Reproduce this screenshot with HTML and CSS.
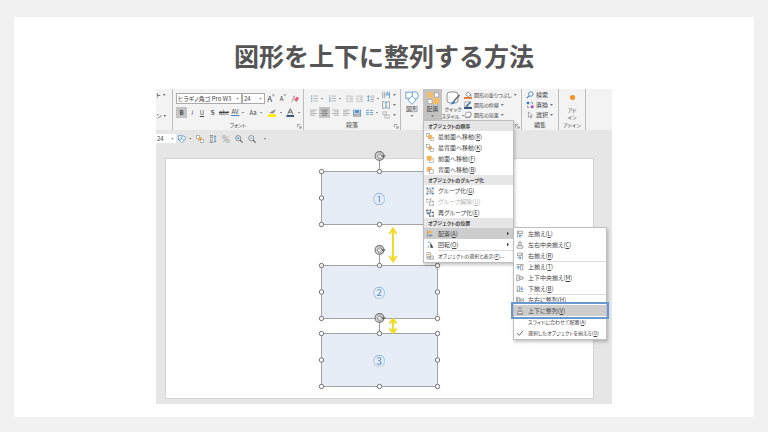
FILE: index.html
```html
<!DOCTYPE html>
<html lang="ja">
<head>
<meta charset="utf-8">
<meta name="viewport" content="width=device-width, initial-scale=1">
<title>図形を上下に整列する方法</title>
<link rel="stylesheet" href="styles.css">
</head>
<body>
<svg class="defs" aria-hidden="true">
  <symbol id="front" viewBox="0 0 10 10"><rect x=".8" y=".8" width="3.6" height="3.6" fill="#fff" stroke="#8a8a8a" stroke-width=".7"/><rect x="5.6" y="5.8" width="3.6" height="3.4" fill="#fff" stroke="#8a8a8a" stroke-width=".7"/><rect x="2.4" y="2.4" width="5" height="5" fill="#f4b45c"/></symbol>
  <symbol id="back" viewBox="0 0 10 10"><rect x="2.4" y="2.4" width="5" height="5" fill="#f4b45c"/><rect x=".8" y=".8" width="3.6" height="3.6" fill="#fff" stroke="#8a8a8a" stroke-width=".7"/><rect x="5.6" y="5.8" width="3.6" height="3.4" fill="#fff" stroke="#8a8a8a" stroke-width=".7"/></symbol>
  <symbol id="forward" viewBox="0 0 10 10"><rect x="4.6" y="4.8" width="4.4" height="4.4" fill="#fff" stroke="#888" stroke-width=".7"/><rect x="1" y="1" width="6" height="6" fill="#f4b45c"/></symbol>
  <symbol id="backward" viewBox="0 0 10 10"><rect x="1" y="1" width="6" height="6" fill="#f4b45c"/><rect x="4.6" y="4.8" width="4.4" height="4.4" fill="#fff" stroke="#888" stroke-width=".7"/></symbol>
  <symbol id="group" viewBox="0 0 10 10"><rect x="1.4" y="1.4" width="7.4" height="7.2" fill="none" stroke="#777" stroke-width=".6"/><path d="M3 3h3v3H3zM5 5h2.500v2.500H5z" fill="none" stroke="#888" stroke-width=".7"/><path d="M.6.6h1.800v1.800H.6zM7.800.6h1.800v1.800H7.800zM.6 7.600h1.800v1.800H.6zM7.800 7.600h1.800v1.800H7.800z" fill="#3d82c4"/></symbol>
  <symbol id="ungroup" viewBox="0 0 10 10"><path d="M1 1.500h4.500v4H1zM4.500 4h4.500v5H4.500z" fill="none" stroke="#aaa" stroke-width=".8"/><path d="M.4.7H2v1.500H.4zM5 .7h1.500v1.500H5zM8 3.400h1.500v1.500H8zM4 8.200h1.500v1.500H4zM8.200 8.200h1.500v1.500H8.200z" fill="#999"/></symbol>
  <symbol id="regroup" viewBox="0 0 10 10"><path d="M1 1.500h4.500v4H1zM4.500 4h4.500v5H4.500z" fill="none" stroke="#666" stroke-width=".7"/><path d="M.4.7H2v1.500H.4zM5 .7h1.500v1.500H5zM8 3.400h1.500v1.500H8zM4 8.200h1.500v1.500H4zM8.200 8.200h1.500v1.500H8.200z" fill="#444"/><path d="M2.800 3v3.600M1.200 5l1.600 1.800L4.400 5" fill="none" stroke="#2b78c2"/></symbol>
  <symbol id="alignobj" viewBox="0 0 10 10"><path d="M2 1v8" stroke="#777" stroke-width=".7"/><rect x="2.800" y="1" width="4.500" height="3.500" fill="#f4b45c"/><path d="M8 7H4M5.500 5.500L4 7l1.500 1.500" fill="none" stroke="#2b78c2"/></symbol>
  <symbol id="rotate" viewBox="0 0 10 10"><path d="M5.500 8.500V2L9.400 8.500z" fill="#444"/><path d="M4.400 8.500H.6L4.400 3.500z" fill="#bcd3ea"/><path d="M2 2.500C3 1 4.500 1 5 2.500" fill="none" stroke="#2b78c2" stroke-width=".8"/></symbol>
  <symbol id="pane" viewBox="0 0 10 10"><path d="M1 .8h5v8H1z" fill="#fff" stroke="#888" stroke-width=".7"/><path d="M2.200 2h2.500v2H2.200z" fill="#f4b45c"/><path d="M2.200 5.500h2.500v2H2.200zM5.500 5h3.800v4H5.500z" fill="#fff" stroke="#777" stroke-width=".7"/><path d="M6.500 6l2 2" stroke="#d99a42" stroke-width=".8"/></symbol>
  <symbol id="al" viewBox="0 0 10 10"><path d="M2 .5v9" stroke="#777" stroke-width=".8"/><path d="M3.300 1.500h5v3h-5z" fill="#fff" stroke="#777" stroke-width=".8"/><path d="M8 7.200H4M5.600 5.500L3.800 7.200l1.800 1.700" fill="none" stroke="#2b78c2"/></symbol>
  <symbol id="av" viewBox="0 0 10 10"><path d="M5 0v2M5 5v1M5 9v1" stroke="#777" stroke-width=".8"/><path d="M3.300 2h3.400v3H3.300zM1.500 6h7v3h-7z" fill="#fff" stroke="#777" stroke-width=".8"/></symbol>
  <symbol id="dv" viewBox="0 0 10 10"><path d="M3 .7h4M1 9.300h8" stroke="#777" stroke-width=".8"/><path d="M3.500 2.300h3v2.200h-3zM2 5.800h6v2.200H2z" fill="#fff" stroke="#777" stroke-width=".8"/></symbol>
  <symbol id="lines" viewBox="0 0 10 10"><path d="M0 1.500h10M0 4h7M0 6.500h10M0 9h7" stroke="#919191" stroke-width=".9"/></symbol>
  <symbol id="center" viewBox="0 0 10 10"><path d="M0 1.500h10M1.500 4h7M0 6.500h10M1.500 9h7" stroke="#666" stroke-width=".9"/></symbol>
  <symbol id="list" viewBox="0 0 10 10"><path d="M0 1.500h1.800M0 5h1.800M0 8.500h1.800" stroke="#3d82c4" stroke-width="1.400"/><path d="M3.500 1.500H10M3.500 5H10M3.500 8.500H10" stroke="#888" stroke-width=".8"/></symbol>
  <symbol id="numbers" viewBox="0 0 10 10"><path d="M1 0v3M.2 4.200h1.600v1L.2 6.200h1.600M.2 7.500h1.600v2H.2" fill="none" stroke="#3d82c4" stroke-width=".7"/><path d="M3.500 1.500H10M3.500 5H10M3.500 8.500H10" stroke="#888" stroke-width=".8"/></symbol>
  <symbol id="indent" viewBox="0 0 10 10"><path d="M0 1.500h10M5 4h5M5 6.500h5M0 9h10" stroke="#aaa" stroke-width=".9"/><path d="M0 5.200h3.500M2 3.800L.4 5.200 2 6.600" fill="none" stroke="#aaa" stroke-width=".8"/></symbol>
  <symbol id="spacing" viewBox="0 0 10 10"><path d="M2 1v8M.5 2.800L2 1l1.500 1.800M.5 7.200L2 9l1.500-1.800" fill="none" stroke="#3d82c4" stroke-width=".9"/><path d="M5 1.500h5M5 4h5M5 6.500h5M5 9h5" stroke="#888" stroke-width=".8"/></symbol>
  <symbol id="columns" viewBox="0 0 10 10"><path d="M0 2h4.300M0 5h4.300M0 8h4.300M5.700 2H10M5.700 5H10M5.700 8H10" stroke="#5a96cc" stroke-width="1.200"/></symbol>
  <symbol id="direction" viewBox="0 0 10 10"><path d="M1 1v8M3.400 1v8" stroke="#777" stroke-width=".8"/><path d="M5 6l1.800-5L8.600 6M5.600 4.500H8M9.400 1v8M8.200 7.800L9.400 9" fill="none" stroke="#3d82c4" stroke-width=".8"/></symbol>
  <symbol id="vfit" viewBox="0 0 10 10"><path d="M3 .7H.8v8.600H3M7 .7h2.200v8.600H7" fill="none" stroke="#777" stroke-width=".8"/><path d="M5 1v8M3.600 2.500L5 1l1.400 1.500M3.600 7.500L5 9l1.400-1.500" fill="none" stroke="#3d82c4" stroke-width=".9"/></symbol>
  <symbol id="shapes" viewBox="0 0 14 14"><circle cx="9.500" cy="4.500" r="3.800" fill="#fff" stroke="#5a9bd5" stroke-width=".9"/><rect x=".8" y="1.200" width="6.500" height="6" fill="#fff" stroke="#5a9bd5" stroke-width=".9"/><path d="M7 4.800l4.200 4.200L7 13.300 2.800 9z" fill="#fff" stroke="#5a9bd5" stroke-width=".9"/></symbol>
  <symbol id="launch" viewBox="0 0 6 6"><path d="M.5 4V.5H4M2.200 2.200L5 5M5 2.500V5H2.500" fill="none" stroke="#777" stroke-width=".8"/></symbol>
  <symbol id="zoomer" viewBox="0 0 10 10"><circle cx="4" cy="4" r="3.200" fill="#fff" stroke="#666" stroke-width=".9"/><path d="M6.400 6.400L9.500 9.500" stroke="#555" stroke-width="1.300"/><path d="M2.300 4h3.400" stroke="#2b78c2" stroke-width=".9"/></symbol>
  <symbol id="handles" viewBox="0 0 117 72" overflow="visible">
    <path d="M58.500 5v12" stroke="#999"/>
    <rect x=".5" y="17.500" width="116" height="53" fill="#e6edf6" stroke="#a3a3a3"/>
    <g fill="#fff" stroke="#707070"><circle cx=".5" cy="17.500" r="2.200"/><circle cx="58.500" cy="17.500" r="2.200"/><circle cx="116.500" cy="17.500" r="2.200"/><circle cx=".5" cy="44" r="2.200"/><circle cx="116.500" cy="44" r="2.200"/><circle cx=".5" cy="70.500" r="2.200"/><circle cx="58.500" cy="70.500" r="2.200"/><circle cx="116.500" cy="70.500" r="2.200"/></g>
    <circle cx="58.500" cy="2" r="4.400" fill="#ddd" stroke="#777" stroke-width="1.100"/><path d="M60.500 3.800A2.400 2.400 0 1 1 61 1.500" fill="none" stroke="#777" stroke-width=".8"/><path d="M59.800 1.200h5l-2.500 2.800z" fill="#666"/>
  </symbol>
</svg>

<main class="card">
  <h1 class="title">図形を上下に整列する方法</h1>

  <section class="app">
    <div class="ribbon">
      <div class="group group-edge">
        <span>ト<i class="caret"></i></span><span>ン<i class="caret"></i></span>
      </div>

      <div class="group group-font">
        <div class="body rows">
          <div class="row">
            <label class="combo combo-font"><select class="field" aria-label="フォント名"><option>ヒラギノ角ゴ Pro W3</option></select><i class="caret"></i></label>
            <label class="combo combo-size"><select class="field" aria-label="フォント サイズ"><option>24</option></select><i class="caret"></i></label>
            <button class="tool w12 big">A<sup>^</sup></button>
            <button class="tool w12">A<sup>ˇ</sup></button>
            <button class="tool w12" aria-label="書式のクリア"><svg class="ic8" viewBox="0 0 10 10"><path d="M1 9l3-8 2.500 7M2 5.500h3" fill="none" stroke="#b888b0"/><path d="M4.500 6.500L7.500 2 10 4 6.800 8.500z" fill="#e05d6c"/></svg></button>
          </div>
          <div class="row">
            <button class="tool w11 on"><b>B</b></button>
            <button class="tool w10"><em>I</em></button>
            <button class="tool w10"><u>U</u></button>
            <button class="tool w11"><b>S</b></button>
            <button class="tool w12"><s>abc</s></button>
            <button class="tool w16"><span class="kern">AV</span><i class="caret"></i></button>
            <button class="tool w20">Aa<i class="caret"></i></button>
            <button class="tool w18" aria-label="蛍光ペンの色"><svg class="ic9" viewBox="0 0 10 10"><path d="M1 5.500L9 1 6 6z" fill="#888"/><path d="M0 7h9v3H0z" fill="#ffeb00"/></svg><i class="caret"></i></button>
            <button class="tool w18" aria-label="フォントの色"><svg class="ic9" viewBox="0 0 10 10"><path d="M2 6.500L4.800.8l2.800 5.700M3 4.600h3.600" fill="none" stroke="#555"/><path d="M.5 7.600h8.500V10H.5z" fill="#3f5878"/></svg><i class="caret"></i></button>
          </div>
        </div>
        <div class="caption caption-kana">フォント<svg class="launch"><use href="#launch"/></svg></div>
      </div>

      <div class="group group-para">
        <div class="body split">
          <div class="rows">
            <div class="row">
              <button class="tool w18" aria-label="箇条書き"><svg class="ic7"><use href="#list"/></svg><i class="caret"></i></button>
              <button class="tool w18" aria-label="段落番号"><svg class="ic7"><use href="#numbers"/></svg><i class="caret"></i></button>
              <button class="tool w10" aria-label="インデントを減らす"><svg class="ic7"><use href="#indent"/></svg></button>
              <button class="tool w10" aria-label="インデントを増やす"><svg class="ic7"><use href="#indent"/></svg></button>
              <button class="tool w18" aria-label="行間"><svg class="ic7"><use href="#spacing"/></svg><i class="caret"></i></button>
            </div>
            <div class="row">
              <button class="tool w11" aria-label="左揃え"><svg class="ic7"><use href="#lines"/></svg></button>
              <button class="tool w11 on" aria-label="中央揃え"><svg class="ic7"><use href="#center"/></svg></button>
              <button class="tool w11" aria-label="右揃え"><svg class="ic7 flip"><use href="#lines"/></svg></button>
              <button class="tool w11" aria-label="両端揃え"><svg class="ic7"><use href="#lines"/></svg></button>
              <button class="tool w10" aria-label="均等割り付け"><svg class="ic8" viewBox="0 0 10 10"><path d="M.5.500v9M9.500.500v9" stroke="#3d82c4"/><path d="M2 1h6v4H2z" fill="#5a96cc"/><path d="M1 6.500h8M1 8.800h8" stroke="#666"/></svg></button>
              <button class="tool w20" aria-label="段組み"><svg class="ic7"><use href="#columns"/></svg><i class="caret"></i></button>
            </div>
          </div>
          <div class="stack">
            <button class="tool" aria-label="文字列の方向"><svg class="ic8"><use href="#direction"/></svg><i class="caret"></i></button>
            <button class="tool" aria-label="文字の配置"><svg class="ic8"><use href="#vfit"/></svg><i class="caret"></i></button>
            <button class="tool" aria-label="SmartArt に変換"><svg class="ic8" viewBox="0 0 10 10"><path d="M.8 1h5v3.500h-5zM3.500 5h5.700v4H3.500z" fill="#e8e8e8" stroke="#aaa" stroke-width=".8"/></svg><i class="caret"></i></button>
          </div>
        </div>
        <div class="caption">段落<svg class="launch"><use href="#launch"/></svg></div>
      </div>

      <div class="group group-draw">
        <div class="body split">
          <button class="large large-shapes"><svg class="ic14"><use href="#shapes"/></svg>図形<i class="caret"></i></button>
          <div class="anchor">
            <button class="large on" aria-haspopup="menu" aria-expanded="true"><svg class="ic14" viewBox="0 0 14 14"><path d="M1 1h6v6H1zM7 7h6.500v6H7z" fill="#f3bd6c"/><path d="M8.500 2h4v4h-4zM2 8.500h4v4H2z" fill="#fff" stroke="#999" stroke-width=".6"/></svg>配置<i class="caret"></i></button>
            <ul class="menu" role="menu">
              <li class="head">オブジェクトの順序</li>
              <li><button class="item"><svg><use href="#front"/></svg>最前面へ移動(<u>R</u>)</button></li>
              <li><button class="item"><svg><use href="#back"/></svg>最背面へ移動(<u>K</u>)</button></li>
              <li><button class="item"><svg><use href="#forward"/></svg>前面へ移動(<u>F</u>)</button></li>
              <li><button class="item"><svg><use href="#backward"/></svg>背面へ移動(<u>B</u>)</button></li>
              <li class="head">オブジェクトのグループ化</li>
              <li><button class="item"><svg><use href="#group"/></svg>グループ化(<u>G</u>)</button></li>
              <li><button class="item" disabled><svg><use href="#ungroup"/></svg>グループ解除(<u>U</u>)</button></li>
              <li><button class="item"><svg><use href="#regroup"/></svg>再グループ化(<u>E</u>)</button></li>
              <li class="head">オブジェクトの位置</li>
              <li class="anchor">
                <button class="item active"><svg><use href="#alignobj"/></svg>配置(<u>A</u>)<i class="more"></i></button>
                <ul class="menu submenu" role="menu">
                  <li><button class="item"><svg><use href="#al"/></svg>左揃え(<u>L</u>)</button></li>
                  <li><button class="item"><svg><use href="#av"/></svg>左右中央揃え(<u>C</u>)</button></li>
                  <li><button class="item"><svg class="flip"><use href="#al"/></svg>右揃え(<u>R</u>)</button></li>
                  <li class="ruled"><button class="item"><svg class="turn"><use href="#al"/></svg>上揃え(<u>T</u>)</button></li>
                  <li><button class="item"><svg class="turn"><use href="#av"/></svg>上下中央揃え(<u>M</u>)</button></li>
                  <li><button class="item"><svg class="turn-back"><use href="#al"/></svg>下揃え(<u>B</u>)</button></li>
                  <li class="ruled"><button class="item"><svg class="turn"><use href="#dv"/></svg>左右に整列(<u>H</u>)</button></li>
                  <li><button class="item active marked"><svg><use href="#dv"/></svg>上下に整列(<u>V</u>)</button></li>
                  <li><button class="item kana"><svg></svg>スライドに合わせて配置(<u>A</u>)</button></li>
                  <li><button class="item kana"><svg viewBox="0 0 10 10"><path d="M1.500 5.200L4 8l5-6" fill="none" stroke="#555" stroke-width="1.100"/></svg>選択したオブジェクトを揃える(<u>O</u>)</button></li>
                </ul>
              </li>
              <li><button class="item"><svg><use href="#rotate"/></svg>回転(<u>O</u>)<i class="more"></i></button></li>
              <li class="ruled"><button class="item kana"><svg><use href="#pane"/></svg>オブジェクトの選択と表示(<u>P</u>)...</button></li>
            </ul>
          </div>
          <button class="large large-style"><svg class="ic14" viewBox="0 0 14 14"><rect x="1" y="1" width="11" height="11" rx="3" fill="#fff" stroke="#777" stroke-width=".8"/><path d="M13.500 4L8 10" stroke="#666" stroke-width="1.400"/><path d="M4.500 13.500c2 0 4.500-1 4.500-3.500C6.500 9 6.500 12 4.500 13.500z" fill="#2b78c2"/></svg><span>クイック</span><span>スタイル<i class="caret"></i></span></button>
          <div class="stack stack-text">
            <button class="tool small"><svg class="ic8" viewBox="0 0 10 10"><path d="M2 4.500L5 1l3.500 3.500-3 2.500z" fill="#fff" stroke="#777"/><path d="M8.500 4v3" stroke="#3d82c4"/><path d="M0 7.500h10V10H0z" fill="#ed7d31"/></svg>図形の塗りつぶし<i class="caret"></i></button>
            <button class="tool small"><svg class="ic8" viewBox="0 0 10 10"><path d="M1 1h6M1 1v6h6" fill="none" stroke="#999"/><path d="M3 6.500L8.500 1" stroke="#2b68a8" stroke-width="1.600"/><path d="M0 7.500h10V10H0z" fill="#34557f"/></svg>図形の枠線<i class="caret"></i></button>
            <button class="tool small"><svg class="ic8" viewBox="0 0 10 10"><path d="M2 9l-1-2.500L3.500 1.500h5L10 4 7.500 9z" fill="#aaa"/><path d="M1 5.500L3 1.500h5L9 4 7 7.500H2z" fill="#fff" stroke="#777" stroke-width=".8"/></svg>図形の効果<i class="caret"></i></button>
          </div>
        </div>
        <div class="caption"><svg class="launch"><use href="#launch"/></svg></div>
      </div>

      <div class="group group-edit">
        <div class="body stack">
          <button class="tool"><svg class="ic8" viewBox="0 0 10 10"><circle cx="6" cy="3.800" r="2.800" fill="#fff" stroke="#2b78c2"/><path d="M4 6L1 9" stroke="#2b78c2" stroke-width="1.300"/></svg>検索</button>
          <button class="tool"><svg class="ic8" viewBox="0 0 10 10"><path d="M1 1h3v3H1z" fill="#2b78c2"/><path d="M6 5.500h3.500V9H6z" fill="#a557b5"/><path d="M6 2h2v2M4 8H2V6" fill="none" stroke="#777"/></svg>置換<i class="caret"></i></button>
          <button class="tool"><svg class="ic8" viewBox="0 0 10 10"><path d="M3 1v7l1.800-1.600L6 9l1-.5-1.200-2.500H8z" fill="#fff" stroke="#777" stroke-width=".8"/></svg>選択<i class="caret"></i></button>
        </div>
        <div class="caption">編集</div>
      </div>

      <div class="group group-addin">
        <button class="large"><span class="dot"></span><span>アド</span><span>イン</span></button>
        <div class="caption caption-kana">アドイン</div>
      </div>
    </div>

    <div class="quick">
      <label class="combo combo-quick"><select class="field" aria-label="サイズ"><option>24</option></select><i class="caret"></i></label>
      <button class="tool w16" aria-label="図形"><svg class="ic8" viewBox="0 0 10 10"><rect x=".6" y="1" width="5" height="5" fill="#fff" stroke="#3d82c4" stroke-width=".8"/><circle cx="6.500" cy="4" r="2.800" fill="#fff" stroke="#3d82c4" stroke-width=".8"/><path d="M4.800 4l2.800 2.800-2.800 2.800L2 6.800z" fill="#fff" stroke="#3d82c4" stroke-width=".8"/></svg><i class="caret"></i></button>
      <button class="tool w12" aria-label="配置"><svg class="ic8"><use href="#back"/></svg></button>
      <button class="tool w12" aria-label="上下に整列"><svg class="ic8" viewBox="0 0 10 10"><path d="M1 1h4M1 9h4" stroke="#555"/><path d="M2 2.500h2v5H2z" fill="#fff" stroke="#777" stroke-width=".7"/><path d="M7.500 1v8M6.300 2.300L7.500 1l1.200 1.300M6.300 7.700L7.500 9l1.200-1.300" fill="none" stroke="#3d82c4"/></svg></button>
      <button class="tool w12" aria-label="切り替え"><svg class="ic8" viewBox="0 0 10 10"><path d="M1 1h3v3H1zM5 6h4v3H5zM8.500 1L1.500 8.500" fill="none" stroke="#a3a3a3"/></svg></button>
      <button class="tool w12" aria-label="拡大"><svg class="ic8" viewBox="0 0 10 10"><use href="#zoomer"/><path d="M4 2.300v3.400" stroke="#2b78c2"/></svg></button>
      <button class="tool w12" aria-label="縮小"><svg class="ic8"><use href="#zoomer"/></svg></button>
      <button class="tool w12" aria-label="その他"><i class="caret"></i></button>
    </div>

    <div class="workspace">
      <div class="slide">
        <div class="shape first"><svg><use href="#handles"/></svg><span>①</span></div>
        <div class="shape second"><svg><use href="#handles"/></svg><span>②</span></div>
        <div class="shape third"><svg><use href="#handles"/></svg><span>③</span></div>
        <svg class="arrow tall" viewBox="0 0 10 36"><path d="M5 2v32M1.500 7L5 1.500 8.500 7M1.500 29L5 34.500 8.500 29"/></svg>
        <svg class="arrow short" viewBox="0 0 10 16"><path d="M5 2v12M1.500 5.500L5 1.200l3.500 4.300M1.500 10.500L5 14.800l3.500-4.300"/></svg>
      </div>
    </div>
  </section>
</main>
</body>
</html>
```
FILE: styles.css
```css
* { box-sizing: border-box; }

body {
  margin: 0;
  min-height: 100vh;
  padding: 17px 14px 15px;
  display: flex;
  background: #f1f1f1;
  color: #444;
  font-family: "Noto Sans CJK JP", "Noto Sans", sans-serif;
  font-feature-settings: "palt";
}

button, select {
  margin: 0;
  padding: 0;
  border: 0;
  background: none;
  color: inherit;
  font: inherit;
  font-feature-settings: inherit;
}

svg { display: block; flex: none; }
.defs { position: absolute; width: 0; height: 0; }

.card {
  flex: 1;
  padding: 20px 142px 12px;
  background: #fff;
}

.title {
  margin: 0 0 16px;
  line-height: 36px;
  font-size: 25px;
  font-weight: 700;
  font-feature-settings: normal;
  text-align: center;
  white-space: nowrap;
  color: #555;
}

.app {
  background: #e6e6e6;
  font-size: 6px;
  line-height: 8px;
  white-space: nowrap;
}

/* Ribbon */
.ribbon {
  display: flex;
  height: 41px;
  background: #f3f3f3;
}

.group {
  display: flex;
  flex-direction: column;
  border-right: 1px solid #bdbdbd;
}
.group-edge { width: 17px; padding: 2px 0 0; gap: 13px; }
.group-edge span { display: flex; align-items: center; gap: 2px; }
.group-font { width: 131px; }
.group-para { width: 97px; }
.group-draw { width: 121px; }
.group-edit { width: 37px; }
.group-addin { width: 27px; }

.body { height: 32px; }
.rows { display: flex; flex-direction: column; gap: 3px; padding: 4px 0 0 3px; }
.split { display: flex; }
.split .rows { padding-left: 4px; }
.row { display: flex; height: 11px; }
.stack { display: flex; flex-direction: column; padding-top: 1px; }
.group-edit .stack { padding-left: 4px; }

.caption {
  position: relative;
  text-align: center;
}
.caption-kana { font-size: 5px; }
.launch {
  position: absolute;
  right: 1px;
  top: 3px;
  width: 5px;
  height: 5px;
}

.caret {
  flex: none;
  width: 3px;
  height: 2px;
  background: #777;
  clip-path: polygon(0 0, 100% 0, 50% 100%);
}

.tool {
  display: flex;
  align-items: center;
  justify-content: center;
  gap: 3px;
}
.tool sup { align-self: flex-start; font-size: 5px; line-height: 5px; }
.tool:has(sup) { gap: 0; }
.big { font-size: 8px; }
.stack .tool { height: 10px; justify-content: flex-start; }
.small { font-size: 5px; }
.stack-text .tool, .group-edit .tool { gap: 2px; }
.on { background: #c3c3c3; }
.kern { border-bottom: 1px solid #3d82c4; line-height: 6px; }

.w10 { width: 10px; }
.w11 { width: 11px; }
.w12 { width: 12px; }
.w16 { width: 16px; }
.w18 { width: 18px; }
.w20 { width: 20px; }
.ic7 { width: 7px; height: 7px; }
.ic8 { width: 8px; height: 8px; }
.ic9 { width: 9px; height: 9px; }
.ic14 { width: 14px; height: 14px; }

.combo {
  display: flex;
  align-items: center;
  padding-right: 2px;
  border: 1px solid #ababab;
  background: #fff;
}
.combo-font { width: 66px; }
.combo-size { width: 23px; }
.combo-quick { width: 20px; height: 9px; border: 0; }
.field { appearance: none; flex: 1; min-width: 0; padding-left: 1px; }

.large {
  display: flex;
  flex-direction: column;
  align-items: center;
  width: 19px;
  height: 31px;
  padding-top: 2px;
}
.large .caret { margin-top: 2px; }
.large-shapes { width: 22px; }
.large-style { width: 22px; font-size: 5px; line-height: 7px; }
.large-style span { display: flex; align-items: center; gap: 2px; }
.large-style .caret { margin: 0; }
.group-addin .large { width: 26px; height: 32px; padding-top: 6px; font-size: 5px; line-height: 7px; }
.dot { width: 5px; height: 5px; margin-bottom: 6px; border-radius: 50%; background: #f7901e; }

/* Menus */
.anchor { position: relative; }
.menu {
  position: absolute;
  z-index: 2;
  top: 31px;
  left: 0;
  width: 91px;
  margin: 0;
  padding: 0 0 1px;
  border: 1px solid #bebebe;
  background: #fff;
  box-shadow: 1px 2px 3px #0000003a;
  list-style: none;
}
.submenu { top: -1px; left: 89px; width: 94px; z-index: 3; }
.head {
  height: 10px;
  padding-left: 4px;
  background: #e6e6e6;
  font-size: 5px;
  line-height: 10px;
  font-weight: 700;
}
.item {
  display: flex;
  align-items: center;
  width: 100%;
  height: 11px;
  padding-left: 2px;
}
.item svg { width: 8px; height: 8px; margin-right: 4px; }
.item:disabled { color: #b5b5b5; }
.kana { font-size: 5px; }
.active { background: #cdcdcd; }
.marked { outline: 2px solid #6798cf; outline-offset: 1px; position: relative; }
.ruled { background: linear-gradient(#ddd, #ddd) 14px 0 / 100% 1px no-repeat; }
.more {
  width: 2px;
  height: 4px;
  margin: 0 4px 0 auto;
  background: #444;
  clip-path: polygon(0 0, 100% 50%, 0 100%);
}
.flip { transform: scaleX(-1); }
.turn { transform: rotate(90deg); }
.turn-back { transform: rotate(-90deg); }

/* Quick access bar */
.quick { display: flex; align-items: center; gap: 1px; height: 17px; }

/* Slide canvas */
.workspace { padding: 11px 18px 5px 9px; }
.slide {
  position: relative;
  height: 241px;
  border: 1px solid #d4d4d4;
  background: #fff;
}
.shape {
  position: absolute;
  left: 50%;
  width: 117px;
  height: 72px;
  margin-left: -59px;
  padding-top: 17px;
  display: grid;
  place-items: center;
  color: #5b8ecb;
  font-size: 12px;
  line-height: 16px;
}
.shape svg { position: absolute; inset: 0; width: 100%; height: 100%; overflow: visible; }
.shape span { position: relative; }
.first { top: -5px; }
.second { top: 89px; }
.third { top: 157px; }
.arrow { position: absolute; left: 50%; width: 10px; margin-left: 8px; fill: none; stroke: #f0dc28; stroke-width: 2; }
.tall { top: 68px; height: 36px; }
.short { top: 159px; height: 16px; }
```
